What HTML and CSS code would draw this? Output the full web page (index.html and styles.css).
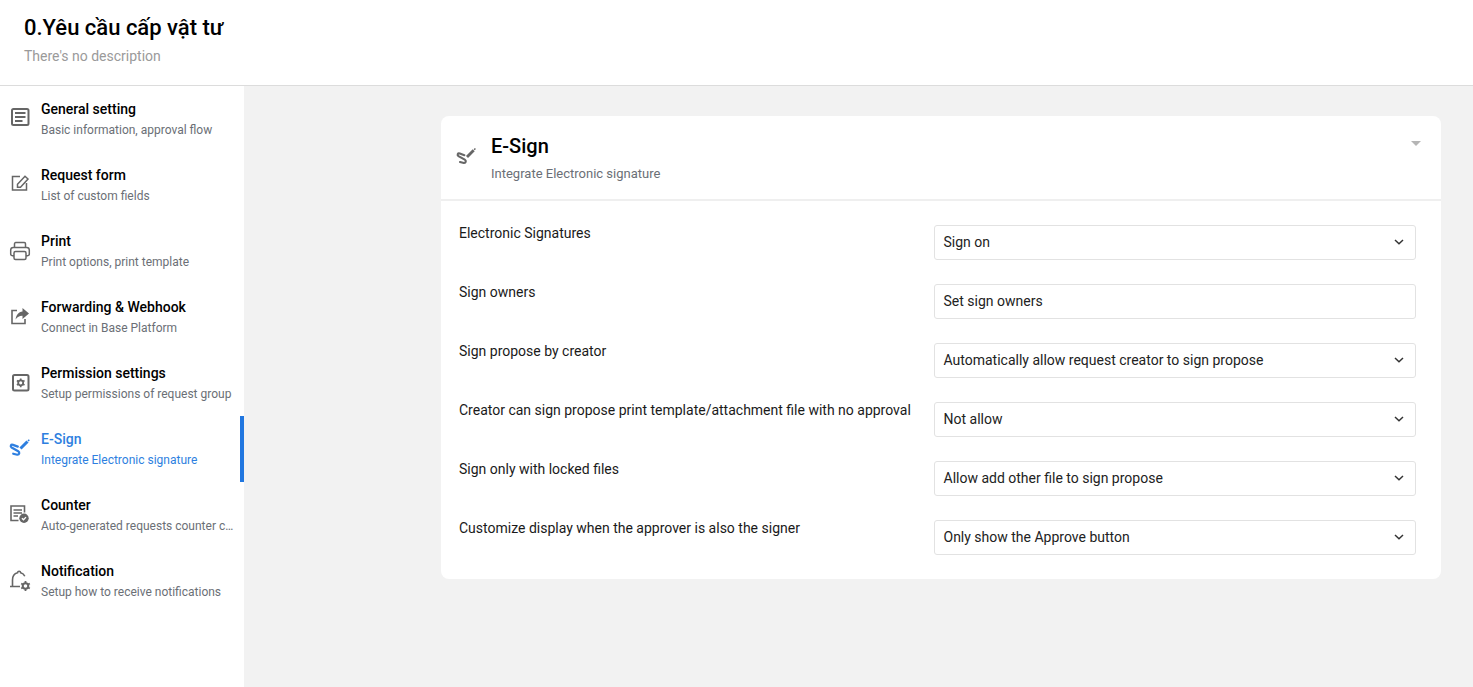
FILE: index.html
```html
<!DOCTYPE html>
<html lang="en">
<head>
<meta charset="utf-8">
<title>Yêu cầu cấp vật tư</title>
<link rel="stylesheet" href="styles.css">
</head>
<body>
<svg class="defs" width="0" height="0" aria-hidden="true">
  <symbol id="sign" viewBox="0 0 24 24">
    <path d="M12.500 11.500L19.500 4.500" fill="none" stroke="currentColor" stroke-width="3"/>
    <path d="M20 4l1.300-1.300" fill="none" stroke="currentColor" stroke-width="1.500"/>
    <path d="M9.800 9.600L5 7.900C2.800 7.200 2 9.400 3.600 10.500L10.200 14.300C12 15.400 11.400 17.800 9.300 17.700L5.200 16.700" fill="none" stroke="currentColor" stroke-width="2.200" stroke-linecap="round" stroke-linejoin="round"/>
  </symbol>
  <symbol id="chev" viewBox="0 0 10 6">
    <path d="M1 1l4 3.700L9 1" fill="none" stroke="currentColor" stroke-width="1.500"/>
  </symbol>
</svg>
<header class="top">
  <h1>0.Yêu cầu cấp vật tư</h1>
  <p>There's no description</p>
</header>
<div class="body">
  <nav class="side">
    <a class="item">
      <svg class="ico" viewBox="0 0 24 24"><rect x="4" y="2" width="16.500" height="16" rx="1.500" fill="none" stroke="currentColor" stroke-width="2"/><path d="M7 6h10.500M7 10h10.500M7 14h7.500" stroke="currentColor" stroke-width="1.800"/></svg>
      <div class="txt"><b>General setting</b><span>Basic information, approval flow</span></div>
    </a>
    <a class="item">
      <svg class="ico" viewBox="0 0 24 24"><path d="M12 3.500H4.500V17h14v-7" fill="none" stroke="currentColor" stroke-width="1.500"/><path d="M9.500 14.200v-3L17 3.200l3 2.800-7.500 8.200z" fill="none" stroke="currentColor" stroke-width="1.500"/></svg>
      <div class="txt"><b>Request form</b><span>List of custom fields</span></div>
    </a>
    <a class="item">
      <svg class="ico" viewBox="0 0 24 24"><path d="M6.500 8.500V4.800c0-.7.5-1.200 1.200-1.200h8.600c.7 0 1.200.5 1.200 1.200v3.700M6 16.800H4.400c-1 0-1.700-.7-1.700-1.700v-4c0-1.500 1.100-2.600 2.600-2.600h13.400c1.500 0 2.600 1.100 2.600 2.600v4c0 1-.7 1.700-1.700 1.700H18" fill="none" stroke="currentColor" stroke-width="1.500"/><rect x="6" y="12.500" width="12" height="8" rx="1.500" fill="none" stroke="currentColor" stroke-width="1.500"/></svg>
      <div class="txt"><b>Print</b><span>Print options, print template</span></div>
    </a>
    <a class="item">
      <svg class="ico" viewBox="0 0 24 24"><path d="M9 5.500H4V18.500h13v-4.500" fill="none" stroke="currentColor" stroke-width="1.600"/><path d="M14.500 3l6.500 5.500-6.500 5.500v-3.200C11.500 10.700 9.500 11.800 7.600 14.500c.6-4.700 3-7.500 6.900-8z" fill="currentColor"/></svg>
      <div class="txt"><b>Forwarding &amp; Webhook</b><span>Connect in Base Platform</span></div>
    </a>
    <a class="item">
      <svg class="ico" viewBox="0 0 24 24"><rect x="5" y="4" width="15.500" height="15.500" rx="1.500" fill="none" stroke="currentColor" stroke-width="2"/><circle cx="12.700" cy="11.800" r="2.500" fill="none" stroke="currentColor" stroke-width="1.800"/><path d="M12.700 7.400v1.600M12.700 14.600v1.600M8.900 9.600l1.400.8M15.100 13.200l1.400.8M8.900 14l1.400-.8M15.100 10.400l1.400-.8" stroke="currentColor" stroke-width="1.700"/></svg>
      <div class="txt"><b>Permission settings</b><span>Setup permissions of request group</span></div>
    </a>
    <a class="item active">
      <svg class="ico"><use href="#sign"/></svg>
      <div class="txt"><b>E-Sign</b><span>Integrate Electronic signature</span></div>
    </a>
    <a class="item">
      <svg class="ico" viewBox="0 0 24 24"><path d="M10.500 17.500H3V3h13.500v6.500" fill="none" stroke="currentColor" stroke-width="1.600"/><path d="M5.500 7h8.500M5.500 10h8.500M5.500 13h4.500" stroke="currentColor" stroke-width="1.500"/><circle cx="16" cy="15.300" r="4.700" fill="currentColor"/><path d="M13.900 15.300l1.600 1.500 2.500-2.700" fill="none" stroke="#fff" stroke-width="1.300"/></svg>
      <div class="txt"><b>Counter</b><span>Auto-generated requests counter configuration</span></div>
    </a>
    <a class="item">
      <svg class="ico" viewBox="0 0 24 24"><path d="M2 17.500h10M4.500 17V11c0-3.700 1.900-6.400 5-7.200.3-2 2.900-2 3.200 0 1.900.5 3.300 1.700 4.100 3.500" fill="none" stroke="currentColor" stroke-width="1.600"/><circle cx="17.500" cy="17" r="2.800" fill="none" stroke="currentColor" stroke-width="2"/><path d="M17.500 12v2M17.500 20v2M13.200 14.500l1.700 1M20.100 18.500l1.700 1M13.200 19.500l1.700-1M20.100 15.500l1.700-1" stroke="currentColor" stroke-width="1.800"/></svg>
      <div class="txt"><b>Notification</b><span>Setup how to receive notifications</span></div>
    </a>
  </nav>
  <main class="content">
    <section class="card">
      <div class="card-head">
        <svg class="head-ico"><use href="#sign"/></svg>
        <div class="head-txt">
          <h2>E-Sign</h2>
          <p>Integrate Electronic signature</p>
        </div>
        <span class="caret"></span>
      </div>
      <div class="rows">
        <div class="row"><label>Electronic Signatures</label><div class="select">Sign on<svg class="chev"><use href="#chev"/></svg></div></div>
        <div class="row"><label>Sign owners</label><div class="select">Set sign owners</div></div>
        <div class="row"><label>Sign propose by creator</label><div class="select">Automatically allow request creator to sign propose<svg class="chev"><use href="#chev"/></svg></div></div>
        <div class="row"><label>Creator can sign propose print template/attachment file with no approval</label><div class="select">Not allow<svg class="chev"><use href="#chev"/></svg></div></div>
        <div class="row"><label>Sign only with locked files</label><div class="select">Allow add other file to sign propose<svg class="chev"><use href="#chev"/></svg></div></div>
        <div class="row"><label>Customize display when the approver is also the signer</label><div class="select">Only show the Approve button<svg class="chev"><use href="#chev"/></svg></div></div>
      </div>
    </section>
  </main>
</div>
</body>
</html>
```
FILE: styles.css
```css
* { box-sizing: border-box; }
html, body { margin: 0; height: 100%; }
body {
  height: 687px;
  overflow: hidden;
  font-family: Roboto, "Noto Sans", sans-serif;
  background: #f2f2f2;
  display: flex;
  flex-direction: column;
  color: #111;
}
.defs { position: absolute; }
.top {
  height: 86px;
  flex: none;
  background: #fff;
  border-bottom: 1px solid #dcdcdc;
  padding: 14px 24px 0;
}
.top h1 {
  margin: 0;
  font-size: 22px;
  line-height: 28px;
  font-weight: 500;
  color: #000;
}
.top p {
  margin: 6px 0 0;
  font-size: 14px;
  line-height: 16px;
  color: #9a9a9a;
}
.body { flex: 1; display: flex; min-height: 0; }
.side {
  width: 244px;
  flex: none;
  background: #fff;
}
.item {
  height: 66px;
  display: flex;
  align-items: flex-start;
  padding: 0 10px 0 8px;
  gap: 9px;
  position: relative;
}
.ico {
  width: 24px;
  height: 24px;
  flex: none;
  margin-top: 21px;
  color: #666;
}
.txt {
  min-width: 0;
  flex: 1;
  display: flex;
  flex-direction: column;
  gap: 4px;
  padding-top: 14px;
}
.txt b {
  font-size: 14px;
  line-height: 18px;
  font-weight: 500;
  color: #000;
}
.txt span {
  font-size: 12px;
  line-height: 16px;
  color: #6b6f76;
  white-space: nowrap;
  overflow: hidden;
  text-overflow: ellipsis;
}
.item.active .ico, .item.active b, .item.active span { color: #2e7fe0; }
.item.active::after {
  content: "";
  position: absolute;
  right: 0;
  top: 0;
  bottom: 0;
  width: 4px;
  background: #2177e0;
}
.content {
  flex: 1;
  min-width: 0;
  padding: 30px 32px 0 197px;
}
.card {
  background: #fff;
  border-radius: 8px;
}
.card-head {
  height: 85px;
  display: flex;
  align-items: flex-start;
  border-bottom: 2px solid #efefef;
  padding: 18px 20px 0 14px;
}
.head-ico {
  width: 23px;
  height: 23px;
  color: #666;
  flex: none;
  margin: 12px 13px 0 0;
}
.head-txt { flex: 1; }
.head-txt h2 {
  margin: 0;
  font-size: 20px;
  line-height: 24px;
  font-weight: 500;
  color: #000;
}
.head-txt p {
  margin: 8px 0 0;
  font-size: 13px;
  line-height: 16px;
  color: #6b6f76;
}
.caret {
  width: 0;
  height: 0;
  border-left: 5px solid transparent;
  border-right: 5px solid transparent;
  border-top: 5px solid #b5b5b5;
  margin-top: 7px;
}
.rows {
  padding: 24px 25px 24px 18px;
  display: flex;
  flex-direction: column;
  gap: 24px;
}
.row { display: flex; height: 35px; }
.row label {
  flex: 1;
  font-size: 14px;
  line-height: 16px;
  color: #1a1a1a;
}
.select {
  width: 482px;
  height: 35px;
  flex: none;
  border: 1px solid #e2e2e2;
  border-radius: 3px;
  padding: 0 11px 2px 8.5px;
  display: flex;
  align-items: center;
  justify-content: space-between;
  font-size: 14px;
  color: #222;
}
.chev { width: 10px; height: 6px; color: #333; flex: none; }
```
